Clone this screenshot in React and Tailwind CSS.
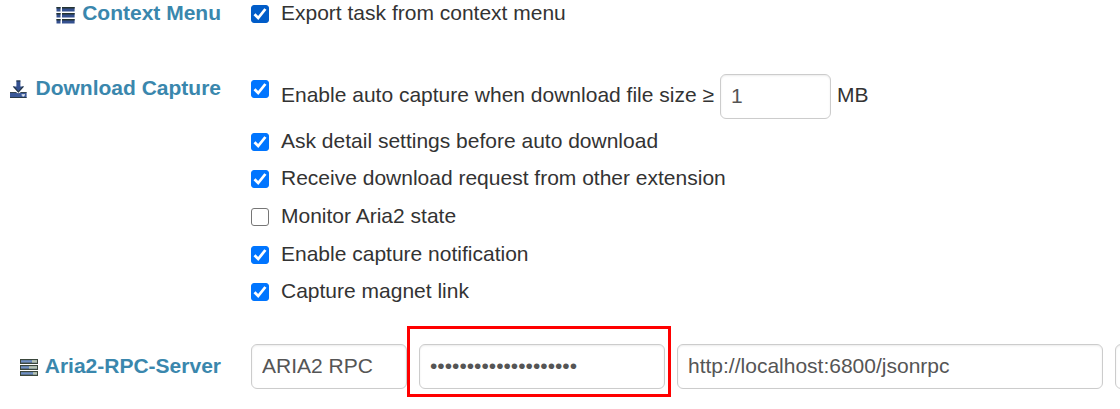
import { useId } from 'react';

const fieldClass =
  'h-[45px] rounded-md border border-[#ccc] bg-white px-2.5 pb-0.5 text-[#555] shadow-[inset_0_1px_2px_rgba(0,0,0,0.075)] outline-none';

function ListIcon() {
  return (
    <svg viewBox="0 0 21 21" className="mt-1 size-[21px] shrink-0" aria-hidden="true">
      {[3, 9, 15].map((y) => (
        <g key={y}>
          <path d={`M1.500 ${y}h4v4.600h-4zM7 ${y}h12.600v4.600H7z`} fill="#34508f" />
          <path d={`M1.500 ${y}h4v1.600h-4zM7 ${y}h12.600v1.600H7z`} fill="#24332f" />
        </g>
      ))}
    </svg>
  );
}

function DownloadIcon() {
  return (
    <svg viewBox="0 0 21 21" className="mt-1 size-[21px] shrink-0" aria-hidden="true">
      <path d="M8.400 1.400h4v6.200h3.600L10.400 13.400 4.800 7.600h3.600z" fill="#33508f" />
      <path d="M8.400 1.400h4v1h-4zM4.800 7.600h1.600l4 4.600 4-4.600H16l-5.600 6.200z" fill="#26353f" />
      <path d="M2 13.200h5.600l2.800 1.200 2.800-1.200h5.400V19H2z" fill="#3a5898" />
      <path d="M2 13.200h5.600l2.800 1.200 2.800-1.200h5.400v.9H2zM2 18.200h16.600v.8H2z" fill="#24302f" />
      <path d="M13.600 15.200h3.400v1.200h-.8v1h-1.800v-1h-.8z" fill="#e8edf5" />
    </svg>
  );
}

function ServerIcon() {
  return (
    <svg viewBox="0 0 21 21" className="mt-1 size-[21px] shrink-0" aria-hidden="true">
      {[[2, 14], [8, 11], [14, 15]].map(([y, x]) => (
        <g key={y}>
          <rect x="2" y={y} width="18" height="5" fill="#3b473c" />
          <rect x="3" y={y + 1.200} width="16" height="2.400" fill="#6f8fc4" />
          <rect x={x} y={y + 1.200} width={19 - x} height="2.400" fill="#b9c4b0" />
        </g>
      ))}
    </svg>
  );
}

function Section({ icon, title, className = '', titleClass = '', children }) {
  return (
    <section className={`flex gap-[30px] ${className}`}>
      <h2 className={`flex w-[221px] shrink-0 justify-end gap-1.5 font-bold whitespace-nowrap text-[#3a87ad] ${titleClass}`}>
        {icon}
        {title}
      </h2>
      <div className="min-w-0 flex-1">{children}</div>
    </section>
  );
}

function Check({ id, checked, className = 'checked:border-[#0075ff] checked:bg-[#0075ff]' }) {
  return (
    <span className="relative mt-[5px] size-[18px] shrink-0">
      <input
        id={id}
        type="checkbox"
        defaultChecked={checked}
        className={`peer block size-[18px] appearance-none rounded-[3px] border border-[#767676] bg-white ${className}`}
      />
      <svg viewBox="0 0 18 18" className="pointer-events-none absolute inset-0 hidden peer-checked:block" aria-hidden="true">
        <path d="M3.500 9.300l3.700 3.700 7.200-9" fill="none" stroke="#fff" strokeWidth="2.800" />
      </svg>
    </span>
  );
}

function Option({ label, checked, checkClass }) {
  const id = useId();
  return (
    <div className="flex items-start gap-3">
      <Check id={id} checked={checked} className={checkClass} />
      <label htmlFor={id}>{label}</label>
    </div>
  );
}

const options = [
  { label: 'Ask detail settings before auto download', checked: true },
  { label: 'Receive download request from other extension', checked: true },
  { label: 'Monitor Aria2 state', checked: false },
  { label: 'Enable capture notification', checked: true },
  { label: 'Capture magnet link', checked: true },
];

export default function App() {
  return (
    <main className="overflow-hidden bg-white pb-5 font-['Liberation_Sans',Arial,sans-serif] text-[21px] leading-[26px] text-[#333]">
      <Section icon={<ListIcon />} title="Context Menu" className="mb-12">
        <Option
          label="Export task from context menu"
          checked
          checkClass="checked:border-[#005cc8] checked:bg-[#005cc8]"
        />
      </Section>

      <Section icon={<DownloadIcon />} title="Download Capture" className="mb-[34px]" titleClass="pt-px">
        <div className="flex items-start gap-3">
          <div className="flex pt-px">
            <Check id="auto-capture" checked />
          </div>
          <div className="flex items-center gap-1.5">
            <label htmlFor="auto-capture" className="pb-1">Enable auto capture when download file size ≥</label>
            <input type="text" aria-label="Minimum file size in MB" defaultValue="1" className={`${fieldClass} w-[111px]`} />
            <span className="pb-1">MB</span>
          </div>
        </div>
        <div className="mt-[3px] grid min-h-47 auto-rows-fr items-center">
          {options.map((option) => (
            <Option key={option.label} {...option} />
          ))}
        </div>
      </Section>

      <Section icon={<ServerIcon />} title="Aria2-RPC-Server" titleClass="pt-[9px]">
        <div className="flex gap-3">
          <input type="text" aria-label="Server name" defaultValue="ARIA2 RPC" className={`${fieldClass} w-[156px] shrink-0`} />
          <div className="relative w-[246px] shrink-0">
            <input type="password" aria-label="Secret key" defaultValue="abcdefghijklmnopqrst" className={`${fieldClass} w-full`} />
            <div className="pointer-events-none absolute -top-[18px] -right-1.5 -bottom-2 -left-3 border-3 border-[#ff0000]" />
          </div>
          <input type="text" aria-label="RPC address" defaultValue="http://localhost:6800/jsonrpc" className={`${fieldClass} w-[49%] shrink-0`} />
          <input type="text" aria-label="Download path" className={`${fieldClass} w-[156px] shrink-0`} />
        </div>
      </Section>
    </main>
  );
}
